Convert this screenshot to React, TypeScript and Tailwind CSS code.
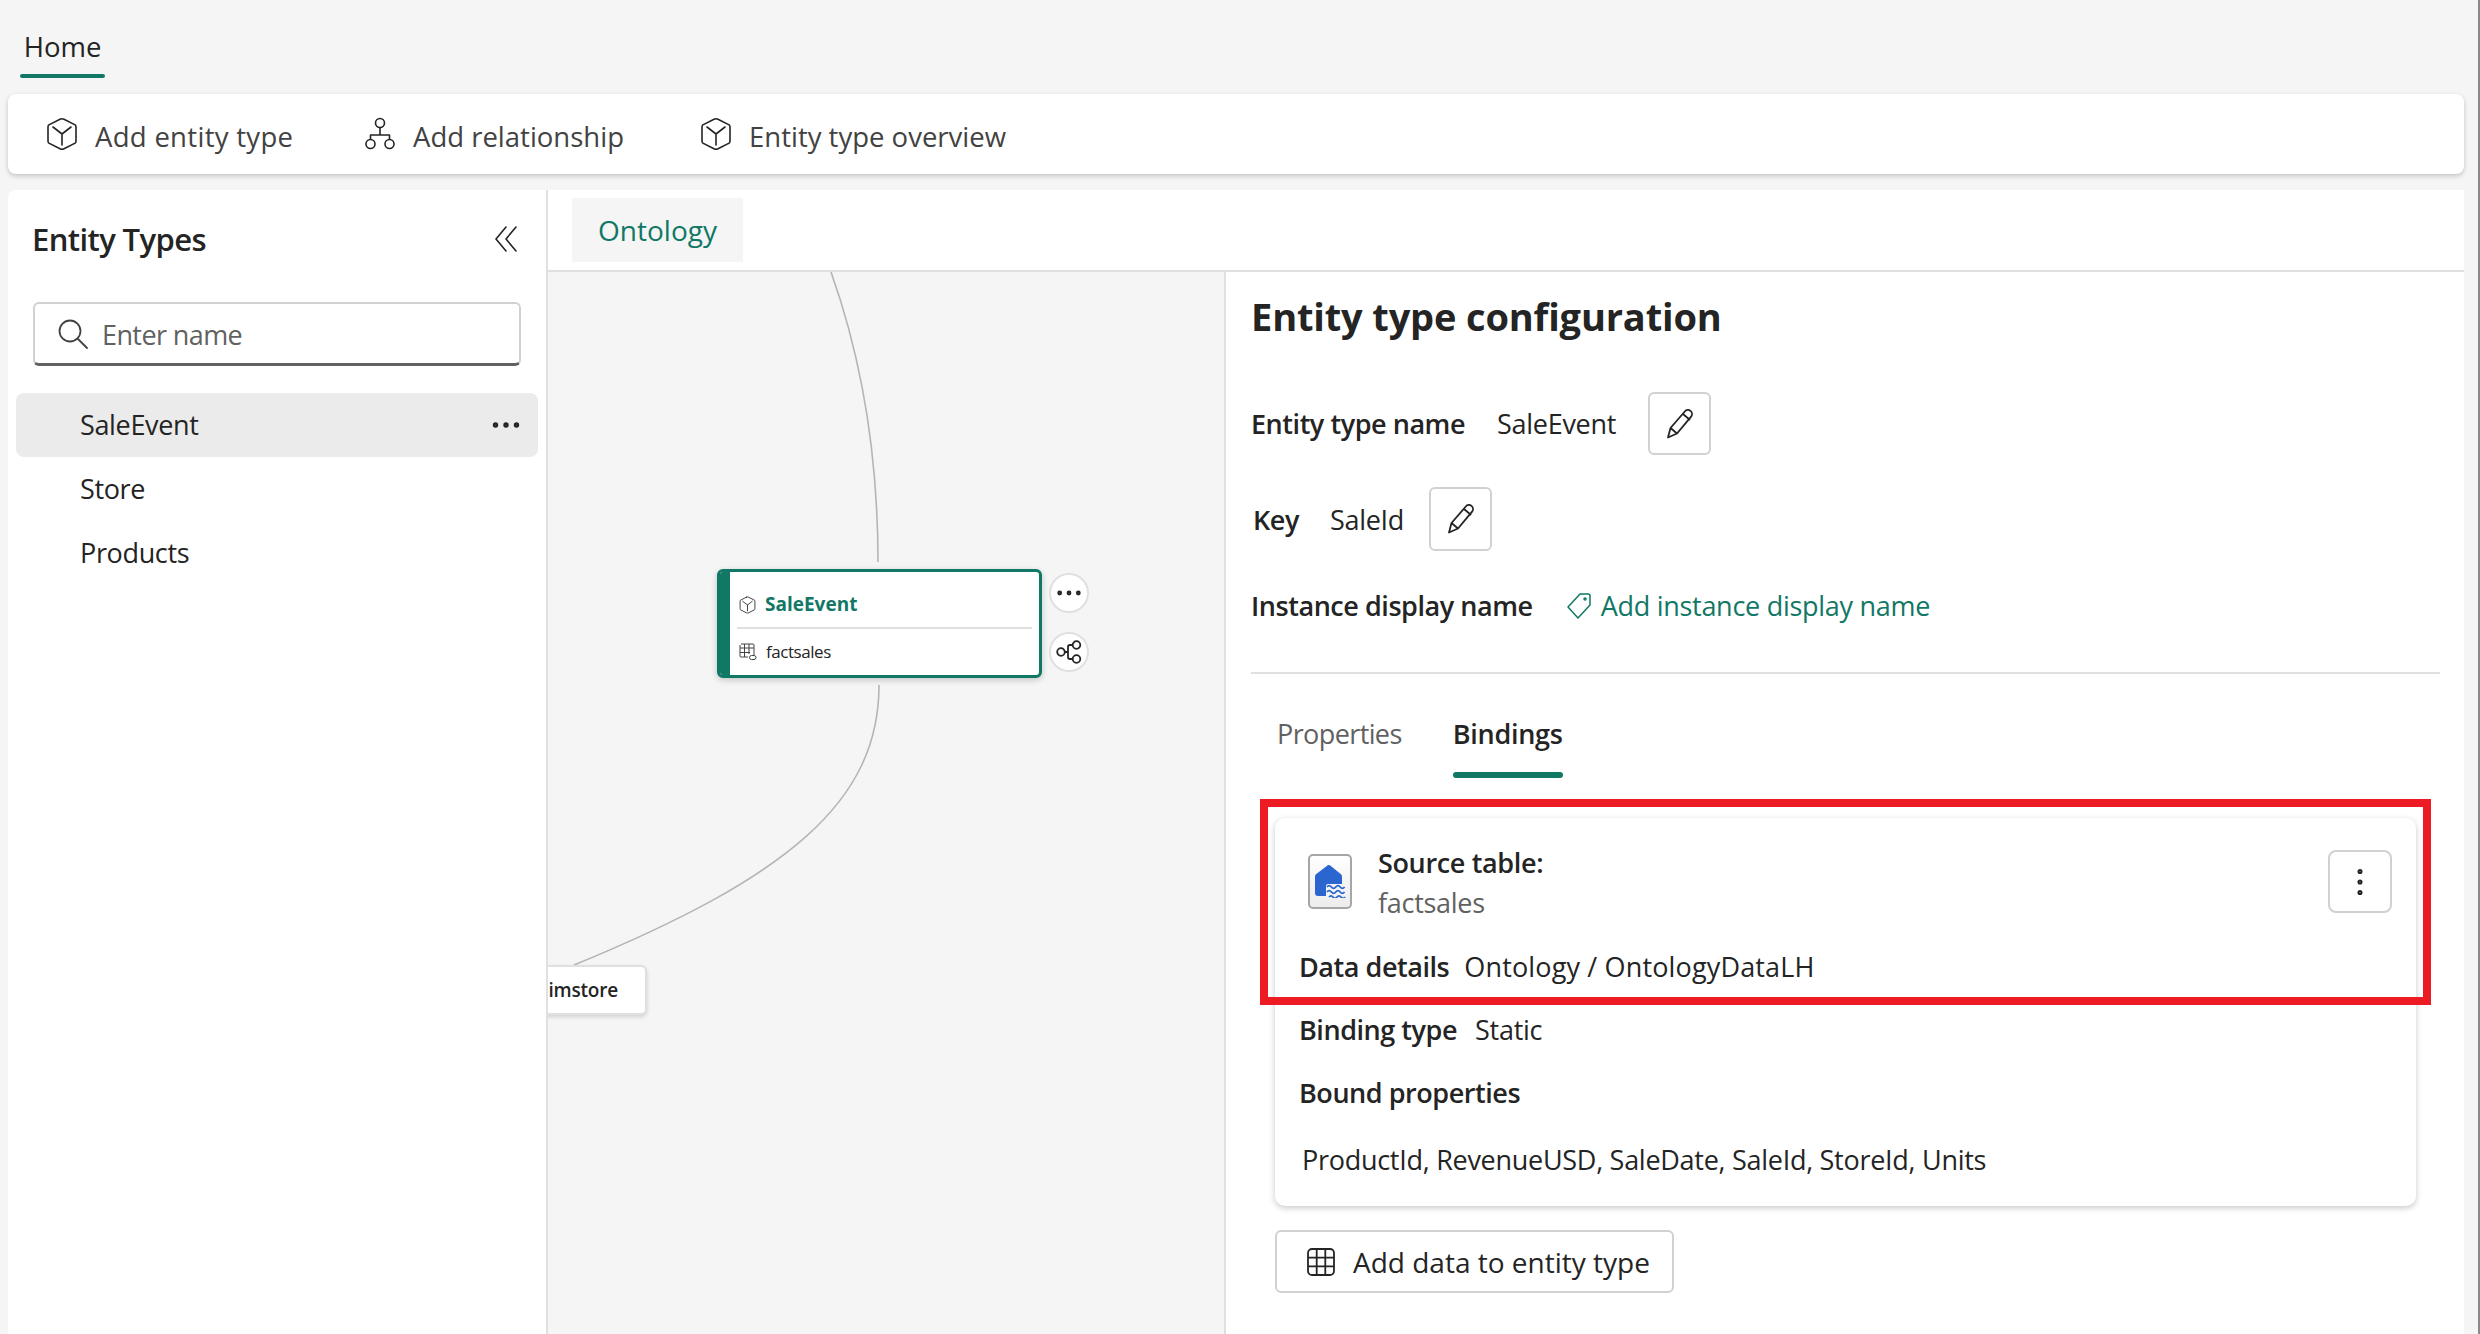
import { Ellipsis, EllipsisVertical } from "lucide-react";

const CubeIcon = ({ className }: { className: string }) => (
  <svg viewBox="0 0 32 34" fill="none" stroke="currentColor" strokeWidth="1.6" strokeLinejoin="round" strokeLinecap="round" className={className}>
    <path d="M14 2.2 3.4 7.6C2.5 8 2 8.8 2 9.8v14.4c0 1 .5 1.8 1.4 2.2L14 31.8c1.3.6 2.7.6 4 0l10.6-5.4c.9-.4 1.4-1.2 1.4-2.2V9.8c0-1-.5-1.8-1.4-2.2L18 2.2c-1.3-.6-2.7-.6-4 0Z" />
    <path d="m7 10 9 7 9-7M16 17v11" />
  </svg>
);

const RelationIcon = () => (
  <svg viewBox="0 0 32 34" fill="none" stroke="currentColor" strokeWidth="1.6" strokeLinejoin="round" className="h-[34px] w-[32px] text-[#242424]">
    <circle cx="16" cy="6" r="4.5" />
    <circle cx="6.5" cy="27" r="4.5" />
    <circle cx="25.5" cy="27" r="4.5" />
    <path d="M16 10.5V18M6.5 22.5V18h19v4.5" />
  </svg>
);

const PencilIcon = () => (
  <svg viewBox="0 0 30 32" fill="none" stroke="currentColor" strokeWidth="1.8" strokeLinejoin="round" className="h-[32px] w-[30px] text-[#242424]">
    <path d="M3 29.5 5.5 20 19.8 3.5c1.5-1.8 4-2 5.7-.6 1.8 1.5 2 4 .6 5.8L12 25.5Z" />
    <path d="m18 6 7 6M5.5 20l6.5 5.5" />
  </svg>
);

const Bold = ({ children }: { children: string }) => (
  <span className="font-semibold tracking-[-0.45px] text-[#242424]">{children}</span>
);

const Toolbar = () => (
  <div className="mx-[8px] flex h-[80px] w-[2456px] items-center rounded-[8px] bg-white pl-[38px] text-[27.5px] font-medium text-[#424242] shadow-[0_2px_5px_rgba(0,0,0,0.2)]">
    <CubeIcon className="h-[34px] w-[32px] text-[#242424]" />
    <span className="ml-[17px] w-[269px] pt-[6px] tracking-[0.3px]">Add entity type</span>
    <RelationIcon />
    <span className="ml-[17px] w-[287px] pt-[6px]">Add relationship</span>
    <CubeIcon className="h-[34px] w-[32px] text-[#242424]" />
    <span className="ml-[17px] pt-[6px]">Entity type overview</span>
  </div>
);

const Sidebar = () => (
  <aside className="flex w-[540px] shrink-0 flex-col rounded-tl-[8px] border-r-2 border-[#e0e0e0] bg-white text-[27px] tracking-[-0.35px] text-[#242424]">
    <div className="mt-[18px] flex h-[64px] items-center justify-between pl-[24px] pr-[28px]">
      <span className="pb-[2px] text-[31px] font-semibold tracking-[-0.6px]">Entity Types</span>
      <svg viewBox="0 0 24 26" fill="none" stroke="#242424" strokeWidth="1.6" strokeLinecap="round" strokeLinejoin="round" className="mb-[3px] h-[26px] w-[24px]">
        <path d="M12 1 2 13l10 12M22 1 12 13l10 12" />
      </svg>
    </div>
    <div className="ml-[25px] mt-[30px] flex h-[64px] w-[488px] items-center rounded-[6px] border-2 border-b-[3px] border-[#d1d1d1] border-b-[#616161] pl-[22px]">
      <svg viewBox="0 0 32 32" fill="none" stroke="#424242" strokeWidth="1.8" strokeLinecap="round" className="h-[32px] w-[32px]">
        <circle cx="13" cy="13" r="10.5" />
        <path d="m21 21 9 9" />
      </svg>
      <span className="ml-[13px] pt-[3px] tracking-[-0.6px] text-[#616161]">Enter name</span>
    </div>
    <div className="mx-[8px] mt-[27px] flex h-[64px] items-center justify-between rounded-[8px] bg-[#ebebeb] pl-[64px] pr-[14px]">
      <span>SaleEvent</span>
      <Ellipsis className="h-[36px] w-[36px] text-[#242424]" strokeWidth={1.6} />
    </div>
    <div className="mx-[8px] flex h-[64px] items-center pl-[64px]">Store</div>
    <div className="mx-[8px] flex h-[64px] items-center pl-[64px]">Products</div>
  </aside>
);

const Canvas = () => (
  <div className="relative w-[678px] shrink-0 overflow-hidden border-r-2 border-[#e0e0e0] bg-[#f5f5f5]">
    <svg viewBox="0 0 676 1062" fill="none" stroke="#b5b5b8" strokeWidth="1.6" className="absolute left-0 top-0 h-[1062px] w-[676px]">
      <path d="M283 0C315 90 330 190 330 290" />
      <path d="M331 413C331 530 240 605 26 693" />
    </svg>

    <div className="absolute left-[169px] top-[297px] flex h-[109px] w-[325px] overflow-hidden rounded-[6px] border-[3px] border-[#117865] bg-white shadow-[0_2px_6px_rgba(0,0,0,0.2)]">
      <div className="w-[10px] shrink-0 bg-[#117865]" />
      <div className="flex flex-1 flex-col px-[7px]">
        <div className="flex h-[57px] items-center border-b-2 border-[#e0e0e0] pl-[2px] pt-[10px]">
          <CubeIcon className="h-[18px] w-[17px] text-[#242424]" />
          <span className="ml-[9px] text-[19px] font-bold text-[#117865]">SaleEvent</span>
        </div>
        <div className="flex flex-1 items-center pl-[2px]">
          <svg viewBox="0 0 18 18" fill="none" stroke="#424242" strokeWidth="1" className="h-[18px] w-[18px]">
            <path d="M2 1h12a1 1 0 0 1 1 1v10M1 2v11a1 1 0 0 0 1 1h7M1 5h14M1 9.5h10M5.5 1v13M10 1v10" />
            <rect x="10.5" y="12.5" width="6.5" height="4" rx="2" />
          </svg>
          <span className="ml-[9px] text-[17px] tracking-[-0.45px] text-[#242424]">factsales</span>
        </div>
      </div>
    </div>

    <div className="absolute left-[501px] top-[301px] flex h-[40px] w-[40px] items-center justify-center rounded-full border-2 border-[#e0e0e0] bg-white">
      <Ellipsis className="h-[32px] w-[32px] text-[#242424]" strokeWidth={1.6} />
    </div>
    <div className="absolute left-[501px] top-[360px] flex h-[40px] w-[40px] items-center justify-center rounded-full border-2 border-[#e0e0e0] bg-white">
      <svg viewBox="0 0 26 24" fill="none" stroke="#242424" strokeWidth="1.8" className="h-[24px] w-[26px]">
        <circle cx="5" cy="12" r="3.8" />
        <circle cx="20.5" cy="5" r="3.8" />
        <circle cx="20.5" cy="19" r="3.8" />
        <path d="M8.8 12H12M16.7 5H14a2 2 0 0 0-2 2v10a2 2 0 0 0 2 2h2.7" />
      </svg>
    </div>

    <div className="absolute left-[-14px] top-[693px] flex h-[50px] w-[113px] items-center justify-end rounded-[6px] border-2 border-[#e0e0e0] bg-white pr-[27px] text-[19px] font-semibold tracking-[-0.2px] text-[#242424] shadow-[0_2px_4px_rgba(0,0,0,0.15)]">
      imstore
    </div>
  </div>
);

const ConfigPanel = () => (
  <div className="flex-1 bg-white pl-[25px] pr-[24px] pt-[18px] text-[27px] tracking-[-0.28px] text-[#242424]">
    <h1 className="flex h-[52px] items-center text-[38px] font-bold tracking-[-0.15px] text-[#242424]">Entity type configuration</h1>

    <div className="mt-[50px] flex h-[63px] items-center">
      <span className="pt-[2px]">
        <Bold>Entity type name</Bold>
      </span>
      <span className="ml-[32px] pt-[2px]">SaleEvent</span>
      <button className="ml-[32px] flex h-[63px] w-[63px] items-center justify-center rounded-[6px] border-2 border-[#d1d1d1]">
        <PencilIcon />
      </button>
    </div>
    <div className="mt-[32px] flex h-[64px] items-center pl-[2px]">
      <span className="pt-[2px]">
        <Bold>Key</Bold>
      </span>
      <span className="ml-[31px] pt-[2px]">SaleId</span>
      <button className="ml-[25px] flex h-[64px] w-[63px] items-center justify-center rounded-[6px] border-2 border-[#d1d1d1]">
        <PencilIcon />
      </button>
    </div>
    <div className="mt-[32px] flex h-[46px] items-center">
      <Bold>Instance display name</Bold>
      <svg viewBox="0 0 24 26" fill="none" stroke="#117865" strokeWidth="1.5" strokeLinejoin="round" className="ml-[34px] h-[26px] w-[24px]">
        <path d="M13 1h8a2 2 0 0 1 2 2v9L11 25 1 14Z" />
        <circle cx="18" cy="6" r="1" />
      </svg>
      <span className="ml-[10px] text-[#117865]">Add instance display name</span>
    </div>

    <div className="mt-[43px] h-[2px] bg-[#e0e0e0]" />

    <div className="flex h-[104px] pl-[26px]">
      <span className="mt-[40px] h-[38px] tracking-[-0.6px] text-[#616161]">Properties</span>
      <div className="ml-[51px] flex h-full flex-col items-center justify-between pt-[40px]">
        <span className="h-[38px] font-semibold">Bindings</span>
        <div className="h-[6px] w-[110px] rounded-[3px] bg-[#117865]" />
      </div>
    </div>

    <div className="ml-[24px] mt-[40px] flex h-[388px] w-[1141px] flex-col rounded-[10px] bg-white pl-[24px] pr-[24px] pt-[32px] shadow-[0_2px_6px_rgba(0,0,0,0.22)]">
      <div className="flex h-[63px] items-start">
        <div className="ml-[9px] mt-[4px] flex h-[55px] w-[44px] shrink-0 items-center justify-center rounded-[5px] border-2 border-[#a6a6a6] bg-gradient-to-b from-white to-[#ececec]">
          <svg viewBox="0 0 31 33" className="h-[33px] w-[31px]">
            <path d="M0 11.5a3 3 0 0 1 1-2.2L11.8 1a3 3 0 0 1 4 0L26 9.3a3 3 0 0 1 1 2.2V21H12v10H3a3 3 0 0 1-3-3Z" fill="#2a65d0" />
            <rect x="11" y="19" width="20" height="14" rx="2" fill="#f4f4f4" />
            <path d="M12 22q2.2-2.6 4.4 0t4.4 0 4.4 0 4.4 0M12 27q2.2-2.6 4.4 0t4.4 0 4.4 0 4.4 0M14 32q2-2.4 4 0t4 0 4 0 4 0" fill="none" stroke="#2a65d0" strokeWidth="1.8" />
          </svg>
        </div>
        <div className="ml-[26px] flex flex-col">
          <span className="h-[40px] font-semibold leading-[25px] tracking-[-0.35px]">Source table:</span>
          <span className="h-[38px] leading-[25px] text-[#616161]">factsales</span>
        </div>
        <button className="ml-auto mr-0 flex h-[63px] w-[64px] items-center justify-center rounded-[8px] border-2 border-[#d1d1d1]">
          <EllipsisVertical className="h-[36px] w-[36px] text-[#242424]" strokeWidth={1.4} />
        </button>
      </div>
      <div className="mt-[34px] flex h-[40px] items-center">
        <Bold>Data details</Bold>
        <span className="ml-[15px] tracking-[0.15px]">Ontology / OntologyDataLH</span>
      </div>
      <div className="mt-[23px] flex h-[40px] items-center">
        <Bold>Binding type</Bold>
        <span className="ml-[18px]">Static</span>
      </div>
      <div className="mt-[23px] flex h-[40px] items-center">
        <Bold>Bound properties</Bold>
      </div>
      <div className="mt-[27px] flex h-[40px] items-center pl-[3px]">ProductId, RevenueUSD, SaleDate, SaleId, StoreId, Units</div>
    </div>

    <button className="ml-[24px] mt-[24px] flex h-[63px] w-[399px] items-center rounded-[6px] border-2 border-[#d1d1d1] pl-[30px] text-[28px] font-medium tracking-normal">
      <svg viewBox="0 0 28 28" fill="none" stroke="#242424" strokeWidth="1.8" className="h-[28px] w-[28px]">
        <rect x="1" y="1" width="26" height="26" rx="4" />
        <path d="M1 9.7h26M1 18.3h26M9.7 1v26M18.3 1v26" />
      </svg>
      <span className="ml-[18px]">Add data to entity type</span>
    </button>
  </div>
);

export default function App() {
  return (
    <div className="relative flex h-[1334px] w-[2480px] flex-col overflow-hidden bg-[#f5f5f5] [font-family:'Open_Sans',sans-serif]">
      <div className="h-[94px] pl-[20px]">
        <div className="flex h-[78px] w-[85px] flex-col items-center justify-end">
          <span className="text-[27.5px] font-medium leading-[36px] text-[#242424]">Home</span>
          <div className="mt-[9px] h-[4px] w-full rounded-[2px] bg-[#117865]" />
        </div>
      </div>

      <Toolbar />

      <div className="ml-[8px] mt-[16px] flex w-[2456px] flex-1">
        <Sidebar />
        <div className="flex flex-1 flex-col bg-white">
          <div className="h-[82px] shrink-0 border-b-2 border-[#e0e0e0] pl-[24px] pt-[8px]">
            <div className="flex h-[64px] w-[171px] items-center justify-center bg-[#f5f5f5] text-[28px] font-medium text-[#117865]">Ontology</div>
          </div>
          <div className="flex flex-1">
            <Canvas />
            <ConfigPanel />
          </div>
        </div>
      </div>

      <div className="absolute right-0 top-0 h-full w-[2px] bg-[#8a8a8a]" />
      <div className="pointer-events-none absolute left-[1260px] top-[799px] h-[206px] w-[1171px] border-[8px] border-[#ed1c24]" />
    </div>
  );
}
